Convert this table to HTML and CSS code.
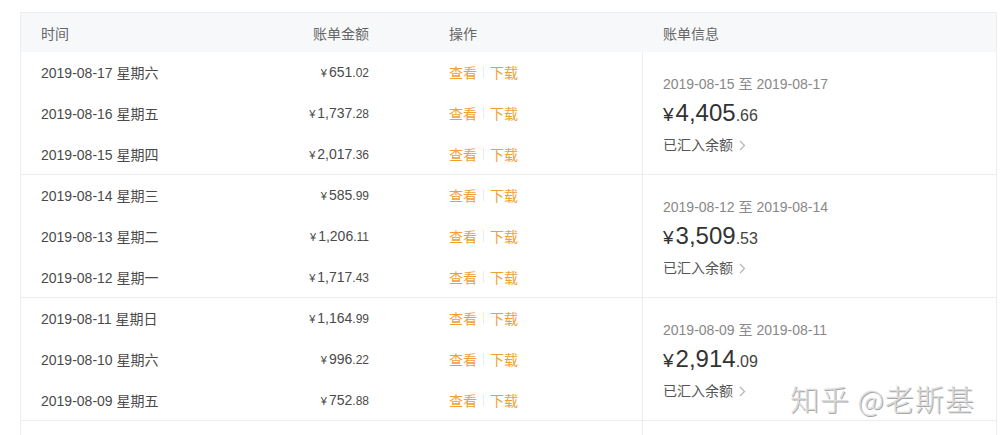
FILE: index.html
```html
<!DOCTYPE html>
<html lang="zh">
<head>
<meta charset="utf-8">
<link rel="stylesheet" href="styles.css">
</head>
<body>
<div class="page">
  <div class="table">
    <div class="head">
      <div class="c1">时间</div>
      <div class="c2">账单金额</div>
      <div class="c3">操作</div>
      <div class="c4">账单信息</div>
    </div>

    <div class="group">
      <div class="rows">
        <div class="row"><div class="c1">2019-08-17 星期六</div><div class="c2 amt"><span class="y">¥</span>651<span class="d">.02</span></div><div class="c3 ops"><span>查看</span><i class="sep"></i><span>下载</span></div></div>
        <div class="row"><div class="c1">2019-08-16 星期五</div><div class="c2 amt"><span class="y">¥</span>1,737<span class="d">.28</span></div><div class="c3 ops"><span>查看</span><i class="sep"></i><span>下载</span></div></div>
        <div class="row"><div class="c1">2019-08-15 星期四</div><div class="c2 amt"><span class="y">¥</span>2,017<span class="d">.36</span></div><div class="c3 ops"><span>查看</span><i class="sep"></i><span>下载</span></div></div>
      </div>
      <div class="info">
        <div class="range">2019-08-15 至 2019-08-17</div>
        <div class="total"><span class="ty">¥</span>4,405<span class="td">.66</span></div>
        <div class="link">已汇入余额<svg class="chev" width="7" height="11" viewBox="0 0 7 11"><path d="M1 1l4.5 4.5L1 10" fill="none" stroke="#b5b5b5" stroke-width="1.2"/></svg></div>
      </div>
    </div>

    <div class="group">
      <div class="rows">
        <div class="row"><div class="c1">2019-08-14 星期三</div><div class="c2 amt"><span class="y">¥</span>585<span class="d">.99</span></div><div class="c3 ops"><span>查看</span><i class="sep"></i><span>下载</span></div></div>
        <div class="row"><div class="c1">2019-08-13 星期二</div><div class="c2 amt"><span class="y">¥</span>1,206<span class="d">.11</span></div><div class="c3 ops"><span>查看</span><i class="sep"></i><span>下载</span></div></div>
        <div class="row"><div class="c1">2019-08-12 星期一</div><div class="c2 amt"><span class="y">¥</span>1,717<span class="d">.43</span></div><div class="c3 ops"><span>查看</span><i class="sep"></i><span>下载</span></div></div>
      </div>
      <div class="info">
        <div class="range">2019-08-12 至 2019-08-14</div>
        <div class="total"><span class="ty">¥</span>3,509<span class="td">.53</span></div>
        <div class="link">已汇入余额<svg class="chev" width="7" height="11" viewBox="0 0 7 11"><path d="M1 1l4.5 4.5L1 10" fill="none" stroke="#b5b5b5" stroke-width="1.2"/></svg></div>
      </div>
    </div>

    <div class="group">
      <div class="rows">
        <div class="row"><div class="c1">2019-08-11 星期日</div><div class="c2 amt"><span class="y">¥</span>1,164<span class="d">.99</span></div><div class="c3 ops"><span>查看</span><i class="sep"></i><span>下载</span></div></div>
        <div class="row"><div class="c1">2019-08-10 星期六</div><div class="c2 amt"><span class="y">¥</span>996<span class="d">.22</span></div><div class="c3 ops"><span>查看</span><i class="sep"></i><span>下载</span></div></div>
        <div class="row"><div class="c1">2019-08-09 星期五</div><div class="c2 amt"><span class="y">¥</span>752<span class="d">.88</span></div><div class="c3 ops"><span>查看</span><i class="sep"></i><span>下载</span></div></div>
      </div>
      <div class="info">
        <div class="range">2019-08-09 至 2019-08-11</div>
        <div class="total"><span class="ty">¥</span>2,914<span class="td">.09</span></div>
        <div class="link">已汇入余额<svg class="chev" width="7" height="11" viewBox="0 0 7 11"><path d="M1 1l4.5 4.5L1 10" fill="none" stroke="#b5b5b5" stroke-width="1.2"/></svg></div>
      </div>
    </div>

    <div class="group">
      <div class="rows"><div class="row"></div><div class="row"></div><div class="row"></div></div>
      <div class="info"></div>
    </div>
  </div>
  <div class="watermark">知乎 @老斯基</div>
</div>
</body>
</html>
```

FILE: styles.css
```css
html, body {
  margin: 0;
  padding: 0;
  background: #fff;
  overflow: hidden;
}
body {
  font-family: "Liberation Sans", Arial, "Noto Sans CJK SC", sans-serif;
  font-size: 14px;
  color: #4a4a4a;
}
.page {
  position: relative;
  box-sizing: border-box;
  padding: 12px 7px 0 20px;
  height: 435px;
  overflow: hidden;
}
.table {
  border: 1px solid #ebedf0;
  border-bottom: none;
  width: 975px;
}
.head {
  display: flex;
  height: 39px;
  align-items: center;
  background: #f7f8fa;
  color: #666;
}
.c1 { width: 180px; padding-left: 20px; }
.c2 { width: 148px; padding-right: 20px; text-align: right; }
.c3 { width: 193px; padding-left: 60px; }
.c4 { padding-left: 21px; }
.group {
  display: flex;
  height: 122px;
  border-bottom: 1px solid #ebedf0;
}
.rows {
  width: 621px;
  display: flex;
  flex-direction: column;
}
.row {
  flex: 1;
  display: flex;
  align-items: center;
}
.amt { color: #4a4a4a; }
.amt .y { font-size: 11px; margin-right: 2px; }
.amt .d { font-size: 12px; }
.ops {
  display: flex;
  align-items: center;
  color: #f0a032;
}
.sep {
  display: inline-block;
  width: 1px;
  height: 12px;
  background: #ececec;
  margin: 0 6px;
}
.info {
  flex: 1;
  border-left: 1px solid #ebedf0;
  padding: 5px 0 0 20px;
  display: flex;
  flex-direction: column;
  justify-content: center;
}
.range {
  color: #888;
  line-height: 20px;
}
.total {
  color: #333;
  font-size: 24px;
  line-height: 34px;
  margin-top: 2px;
}
.total .ty { font-size: 19px; margin-right: 2px; }
.total .td { font-size: 16px; color: #444; }
.link {
  display: flex;
  align-items: center;
  line-height: 24px;
  color: #555;
}
.chev { margin-left: 6px; }
.watermark {
  position: absolute;
  left: 790px;
  top: 377px;
  font-size: 29px;
  letter-spacing: 1px;
  color: #dcdcdc;
  font-family: "Noto Sans CJK SC", sans-serif;
  font-weight: 300;
  text-shadow: 1px 1px 0 #a8a8a8, -1px -1px 0 #fff;
}
```
